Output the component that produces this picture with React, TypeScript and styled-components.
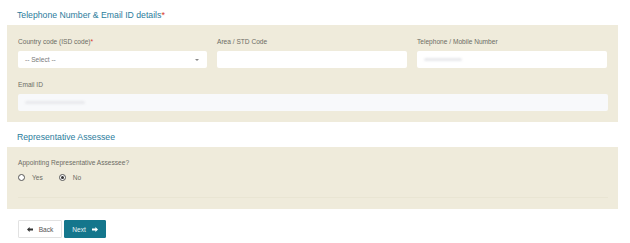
import styled, { createGlobalStyle } from "styled-components";

const GlobalStyle = createGlobalStyle`
  body {
    margin: 0;
    background: #fff;
    font-family: "Liberation Sans", Arial, sans-serif;
  }
`;

const Page = styled.div`
  width: 630px;
  height: 243px;
  padding: 0 12px 0 7px;
  box-sizing: border-box;
  overflow: hidden;
`;

const Heading = styled.h2`
  margin: 0;
  padding: 10px 0 5px 10px;
  font-size: 8.7px;
  line-height: 10px;
  font-weight: 400;
  color: #2b7c9c;
`;

const Required = styled.span`
  color: #d9342b;
`;

const Panel = styled.div`
  background: #efebdb;
  padding: 13px 10px 11px 11px;
  display: flex;
  flex-direction: column;
  gap: 13px;
`;

const Grid = styled.div`
  display: grid;
  grid-template-columns: 189px 190px 190px;
  column-gap: 10px;
`;

const Field = styled.div`
  display: flex;
  flex-direction: column;
  gap: 5px;
`;

const Label = styled.label`
  font-size: 6.6px;
  line-height: 8px;
  color: #6d6b64;
`;

const Input = styled.div<{ $tint?: boolean }>`
  height: 17px;
  background: ${(p) => (p.$tint ? "#f8f9fb" : "#fff")};
  border-radius: 2px;
  box-sizing: border-box;
  display: flex;
  align-items: center;
  padding: 0 7px;
  font-size: 6.6px;
  color: #7a7a7a;
`;

const SelectBox = styled(Input)`
  justify-content: space-between;
`;

const Caret = styled.span`
  width: 0;
  height: 0;
  border-left: 2px solid transparent;
  border-right: 2px solid transparent;
  border-top: 2px solid #888;
  margin-right: 1px;
`;

const Blur = styled.span<{ $w: number }>`
  display: block;
  width: ${(p) => p.$w}px;
  height: 3px;
  background: #e8e9ec;
  filter: blur(1px);
  border-radius: 2px;
`;

const RadioPanel = styled(Panel)`
  padding: 12px 10px 11px 11px;
  gap: 5px;
`;

const RadioRow = styled.div`
  display: flex;
  align-items: center;
  height: 10px;
  gap: 16px;
`;

const RadioOption = styled.label`
  display: flex;
  align-items: center;
  gap: 7px;
  font-size: 6.6px;
  color: #6d6b64;
`;

const RadioDot = styled.span<{ $checked?: boolean }>`
  width: 7px;
  height: 7px;
  border-radius: 50%;
  border: 1px solid #555;
  box-sizing: border-box;
  background: #fff;
  display: flex;
  align-items: center;
  justify-content: center;
  &::after {
    content: "";
    width: 3px;
    height: 3px;
    border-radius: 50%;
    background: ${(p) => (p.$checked ? "#333" : "transparent")};
  }
`;

const Divider = styled.div`
  height: 1px;
  background: #e9e5d3;
  margin-top: 10px;
`;

const Actions = styled.div`
  display: flex;
  gap: 2px;
  padding: 11px 0 0 11px;
`;

const Button = styled.button<{ $primary?: boolean; $w: number }>`
  width: ${(p) => p.$w}px;
  height: 18px;
  box-sizing: border-box;
  display: flex;
  align-items: center;
  justify-content: center;
  gap: 6px;
  font-family: "Liberation Sans", Arial, sans-serif;
  font-size: 6.6px;
  padding: 0;
  border-radius: 1px;
  cursor: pointer;
  border: 1px solid ${(p) => (p.$primary ? "#14768c" : "#e2e2e2")};
  background: ${(p) => (p.$primary ? "#14768c" : "#fff")};
  color: ${(p) => (p.$primary ? "#e8f3f6" : "#555")};
`;

const Arrow = ({ dir, color }: { dir: "left" | "right"; color: string }) => (
  <svg width="6" height="5" viewBox="0 0 6 5">
    <path
      d={dir === "left" ? "M0 2.5 L2.6 0 V1.6 H6 V3.4 H2.6 V5 Z" : "M6 2.5 L3.4 0 V1.6 H0 V3.4 H3.4 V5 Z"}
      fill={color}
    />
  </svg>
);

export default function App() {
  return (
    <>
      <GlobalStyle />
      <Page>
        <Heading>
          Telephone Number &amp; Email ID details<Required>*</Required>
        </Heading>
        <Panel>
          <Grid>
            <Field>
              <Label>
                Country code (ISD code)<Required>*</Required>
              </Label>
              <SelectBox>
                <span>-- Select --</span>
                <Caret />
              </SelectBox>
            </Field>
            <Field>
              <Label>Area / STD Code</Label>
              <Input />
            </Field>
            <Field>
              <Label>Telephone / Mobile Number</Label>
              <Input>
                <Blur $w={38} />
              </Input>
            </Field>
          </Grid>
          <Field>
            <Label>Email ID</Label>
            <Input $tint>
              <Blur $w={60} />
            </Input>
          </Field>
        </Panel>
        <Heading>Representative Assessee</Heading>
        <RadioPanel>
          <Label>Appointing Representative Assessee?</Label>
          <RadioRow>
            <RadioOption>
              <RadioDot />
              Yes
            </RadioOption>
            <RadioOption>
              <RadioDot $checked />
              No
            </RadioOption>
          </RadioRow>
          <Divider />
        </RadioPanel>
        <Actions>
          <Button $w={44}>
            <Arrow dir="left" color="#333" />
            Back
          </Button>
          <Button $primary $w={42}>
            Next
            <Arrow dir="right" color="#fff" />
          </Button>
        </Actions>
      </Page>
    </>
  );
}
